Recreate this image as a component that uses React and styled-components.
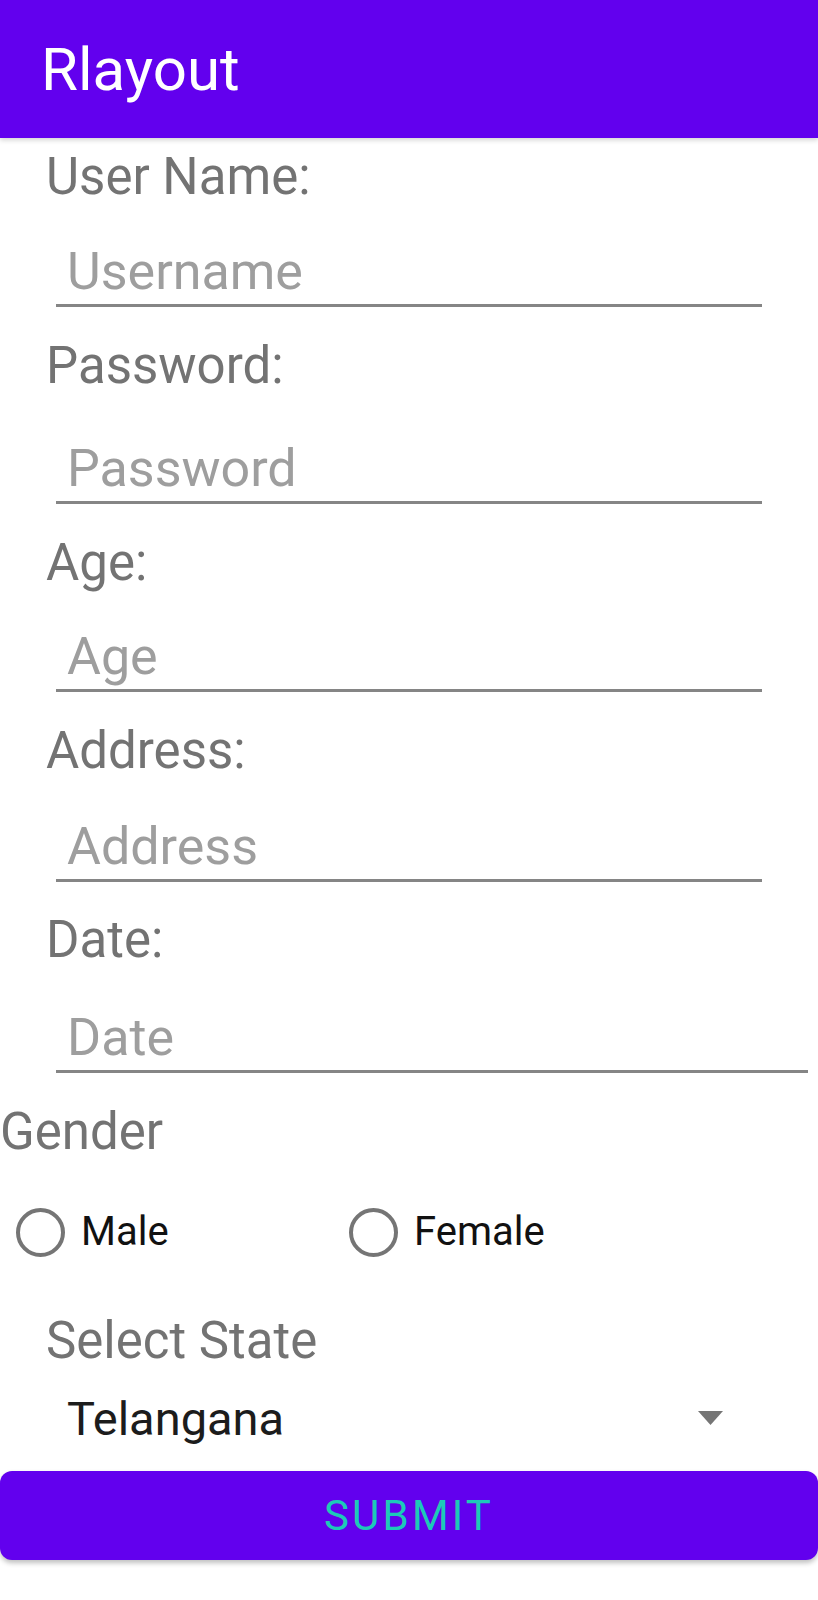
import styled, { createGlobalStyle } from "styled-components";

const GlobalStyle = createGlobalStyle`
    body {
        margin: 0;
        background: #ffffff;
        font-family: Roboto, "Noto Sans", Arial, sans-serif;
    }
`

const fields = [
    { label: "User Name:", hint: "Username", top: 9, gap: 34 },
    { label: "Password:", hint: "Password", top: 29, gap: 42 },
    { label: "Age:", hint: "Age", top: 29, gap: 33 },
    { label: "Address:", hint: "Address", top: 29, gap: 35 },
    { label: "Date:", hint: "Date", top: 28, gap: 37, wide: true },
];

export default function App() {
    return (
        <Page>
            <GlobalStyle />
            <AppBar>Rlayout</AppBar>
            <Form>
                {fields.map((f) => (
                    <Field key={f.label}>
                        <Label $top={f.top}>{f.label}</Label>
                        <Input $gap={f.gap} $wide={f.wide} placeholder={f.hint} />
                    </Field>
                ))}

                <Gender>Gender</Gender>
                <RadioRow>
                    <RadioOption>
                        <Circle />
                        <RadioText>Male</RadioText>
                    </RadioOption>
                    <RadioOption>
                        <Circle />
                        <RadioText>Female</RadioText>
                    </RadioOption>
                </RadioRow>

                <StateLabel>Select State</StateLabel>
                <Spinner>
                    <span>Telangana</span>
                    <svg width="25" height="14" viewBox="0 0 25 14">
                        <path d="M0 0 L25 0 L12.5 14 Z" fill="#757575" />
                    </svg>
                </Spinner>

                <Submit>SUBMIT</Submit>
            </Form>
        </Page>
    )
}

const Page = styled.div`
    width: 818px;
    min-height: 1600px;
    background: #ffffff;
`

const AppBar = styled.header`
    height: 138px;
    display: flex;
    align-items: center;
    padding-left: 41px;
    box-sizing: border-box;
    background: #6200ee;
    color: #ffffff;
    font-size: 60px;
    font-weight: 400;
    box-shadow: 0 2px 5px rgba(0, 0, 0, 0.18);
    position: relative;
`

const Form = styled.div`
    display: flex;
    flex-direction: column;
`

const Field = styled.div`
    display: flex;
    flex-direction: column;
`

const Label = styled.div`
    margin-top: ${(p) => p.$top}px;
    padding-left: 46px;
    font-size: 51px;
    line-height: 60px;
    color: #737373;
`

const Input = styled.input`
    margin: ${(p) => p.$gap}px 0 0 56px;
    width: ${(p) => (p.$wide ? 752 : 706)}px;
    height: 66px;
    padding: 0 0 3px 11px;
    box-sizing: border-box;
    border: none;
    border-bottom: 3px solid #858585;
    outline: none;
    background: transparent;
    font-family: Roboto, sans-serif;
    font-size: 52px;
    color: #212121;

    &::placeholder {
        color: #9e9e9e;
    }
`

const Gender = styled.div`
    margin-top: 29px;
    font-size: 51px;
    line-height: 60px;
    color: #737373;
`

const RadioRow = styled.div`
    display: flex;
    align-items: center;
    height: 60px;
    margin-top: 40px;
    padding-left: 16px;
`

const RadioOption = styled.label`
    display: flex;
    align-items: center;
    gap: 16px;
    width: 333px;
`

const Circle = styled.span`
    width: 49px;
    height: 49px;
    box-sizing: border-box;
    border: 4px solid #757575;
    border-radius: 50%;
`

const RadioText = styled.span`
    font-size: 40px;
    line-height: 50px;
    color: #111111;
`

const StateLabel = styled.div`
    margin-top: 49px;
    padding-left: 46px;
    font-size: 51px;
    line-height: 60px;
    color: #737373;
`

const Spinner = styled.div`
    display: flex;
    align-items: center;
    justify-content: space-between;
    margin: 17px 0 0 56px;
    width: 706px;
    height: 60px;
    padding: 0 39px 0 11px;
    box-sizing: border-box;
    font-size: 47px;
    color: #1c1c1c;
`

const Submit = styled.button`
    margin-top: 23px;
    width: 818px;
    height: 89px;
    border: none;
    border-radius: 12px;
    background: #6200ee;
    color: #1ccab8;
    font-family: Roboto, sans-serif;
    font-size: 42px;
    font-weight: 400;
    letter-spacing: 3.2px;
    box-shadow: 0 3px 5px rgba(0, 0, 0, 0.25);
`
